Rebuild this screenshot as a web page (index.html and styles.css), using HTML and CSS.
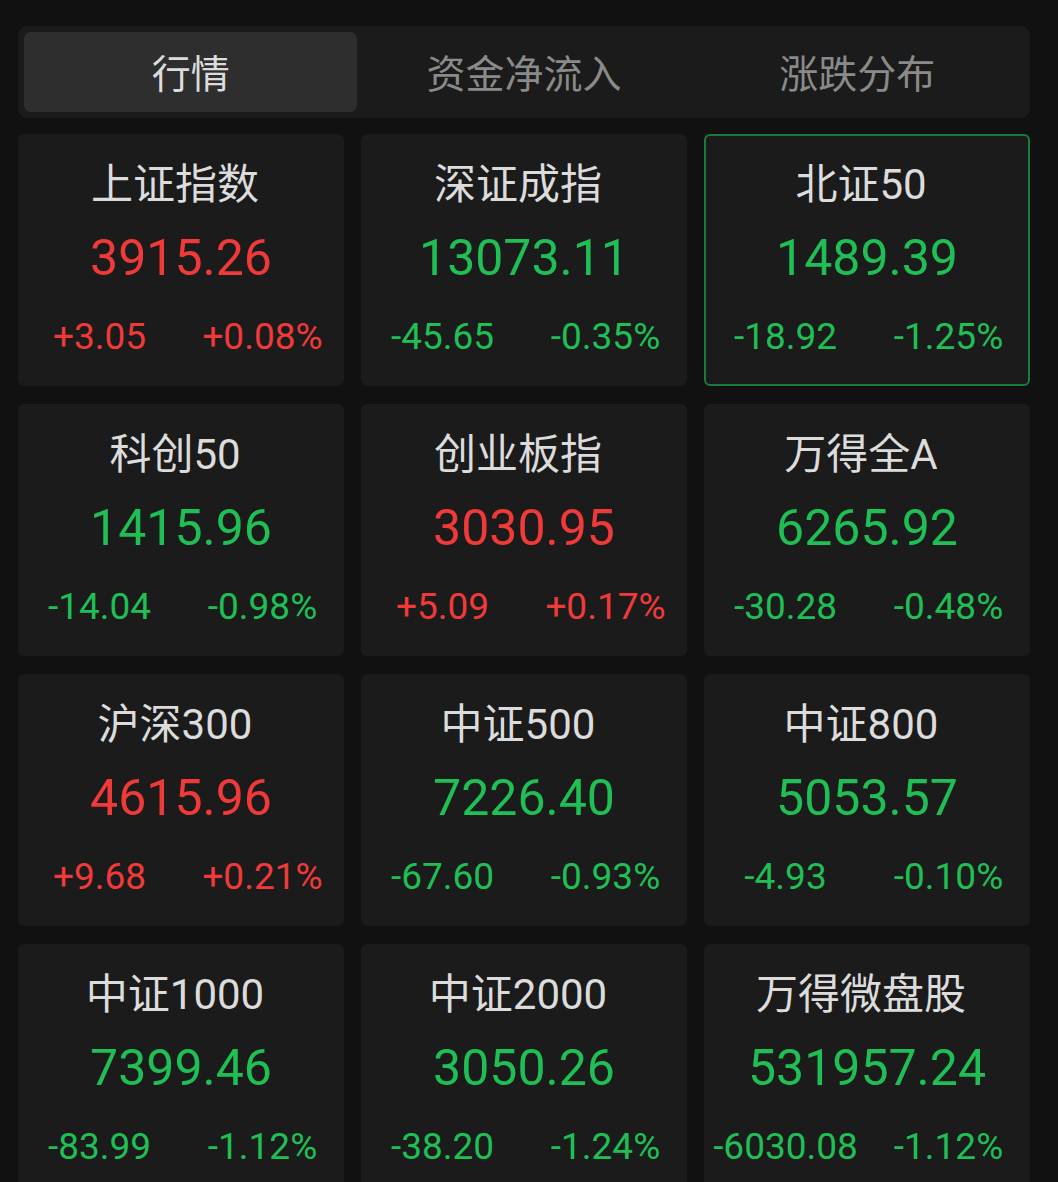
FILE: index.html
```html
<!DOCTYPE html>
<html lang="zh">
<head>
<meta charset="utf-8">
<link rel="stylesheet" href="styles.css">
</head>
<body>
<div class="page">
  <div class="tabs">
    <div class="tab active">行情</div>
    <div class="tab">资金净流入</div>
    <div class="tab">涨跌分布</div>
  </div>
  <div class="grid">
    <div class="card"><div class="name">上证指数</div><div class="value up">3915.26</div><div class="chg up"><span>+3.05</span><span>+0.08%</span></div></div>
    <div class="card"><div class="name">深证成指</div><div class="value down">13073.11</div><div class="chg down"><span>-45.65</span><span>-0.35%</span></div></div>
    <div class="card selected"><div class="name">北证50</div><div class="value down">1489.39</div><div class="chg down"><span>-18.92</span><span>-1.25%</span></div></div>
    <div class="card"><div class="name">科创50</div><div class="value down">1415.96</div><div class="chg down"><span>-14.04</span><span>-0.98%</span></div></div>
    <div class="card"><div class="name">创业板指</div><div class="value up">3030.95</div><div class="chg up"><span>+5.09</span><span>+0.17%</span></div></div>
    <div class="card"><div class="name">万得全A</div><div class="value down">6265.92</div><div class="chg down"><span>-30.28</span><span>-0.48%</span></div></div>
    <div class="card"><div class="name">沪深300</div><div class="value up">4615.96</div><div class="chg up"><span>+9.68</span><span>+0.21%</span></div></div>
    <div class="card"><div class="name">中证500</div><div class="value down">7226.40</div><div class="chg down"><span>-67.60</span><span>-0.93%</span></div></div>
    <div class="card"><div class="name">中证800</div><div class="value down">5053.57</div><div class="chg down"><span>-4.93</span><span>-0.10%</span></div></div>
    <div class="card"><div class="name">中证1000</div><div class="value down">7399.46</div><div class="chg down"><span>-83.99</span><span>-1.12%</span></div></div>
    <div class="card"><div class="name">中证2000</div><div class="value down">3050.26</div><div class="chg down"><span>-38.20</span><span>-1.24%</span></div></div>
    <div class="card"><div class="name">万得微盘股</div><div class="value down">531957.24</div><div class="chg down"><span>-6030.08</span><span>-1.12%</span></div></div>
  </div>
</div>
</body>
</html>
```
FILE: styles.css
```css
html, body {
  margin: 0;
  padding: 0;
  background: #111111;
}
body {
  font-family: Roboto, "Noto Sans CJK SC", sans-serif;
  height: 1182px;
  overflow: hidden;
}
.page {
  padding: 26px 28px 0 18px;
}
.tabs {
  display: grid;
  grid-template-columns: repeat(3, 1fr);
  padding: 6px;
  height: 80px;
  background: #1b1b1b;
  border-radius: 9px;
}
.tab {
  display: flex;
  align-items: center;
  justify-content: center;
  padding-bottom: 2px;
  font-family: "Noto Sans CJK SC", sans-serif;
  font-size: 39px;
  color: #8a8a8a;
  border-radius: 7px;
}
.tab.active {
  background: #2e2e2e;
  color: #dcdcdc;
}
.grid {
  margin-top: 16px;
  display: grid;
  grid-template-columns: repeat(3, 326px);
  grid-auto-rows: 252px;
  column-gap: 17px;
  row-gap: 18px;
}
.card {
  background: #1b1b1b;
  border-radius: 6px;
  box-sizing: border-box;
  display: flex;
  flex-direction: column;
  align-items: stretch;
  text-align: center;
}
.card.selected {
  border: 2px solid #1d7a3c;
}
.card.selected .name { margin-top: 24px; }
.card.selected .chg { margin-left: -2px; margin-right: -2px; }
.name {
  margin-top: 26px;
  padding-right: 12px;
  height: 50px;
  line-height: 50px;
  font-size: 42px;
  color: #dcdcdc;
}
.value {
  margin-top: 18px;
  height: 60px;
  line-height: 60px;
  font-size: 50px;
}
.chg {
  margin-top: 27px;
  height: 44px;
  line-height: 44px;
  font-size: 37px;
  display: grid;
  grid-template-columns: 1fr 1fr;
}
.up { color: #f03a3a; }
.down { color: #1fbf55; }
```
